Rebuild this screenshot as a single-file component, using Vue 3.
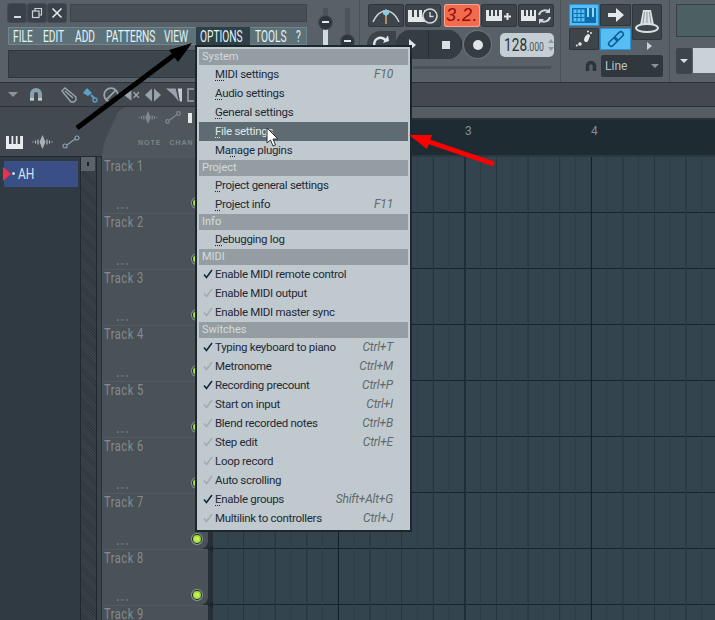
<script setup>
const topMenu = [
  { label: 'FILE', w: 30 },
  { label: 'EDIT', w: 32 },
  { label: 'ADD', w: 31 },
  { label: 'PATTERNS', w: 58 },
  { label: 'VIEW', w: 36 },
  { label: 'OPTIONS', w: 54, active: true },
  { label: 'TOOLS', w: 41 },
  { label: '?', w: 11 },
]

const sections = [
  {
    title: 'System',
    items: [
      { pre: '', key: 'M', post: 'IDI settings', hint: 'F10' },
      { pre: '', key: 'A', post: 'udio settings' },
      { pre: '', key: 'G', post: 'eneral settings' },
      { pre: '', key: 'F', post: 'ile settings', hover: true },
      { pre: 'Ma', key: 'n', post: 'age plugins' },
    ],
  },
  {
    title: 'Project',
    items: [
      { pre: '', key: 'P', post: 'roject general settings' },
      { pre: '', key: 'P', post: 'roject info', hint: 'F11' },
    ],
  },
  { title: 'Info', items: [{ pre: '', key: 'D', post: 'ebugging log' }] },
  {
    title: 'MIDI',
    items: [
      { pre: 'Enable MIDI remote control', check: 'on' },
      { pre: 'Enable MIDI output', check: 'off' },
      { pre: 'Enable MIDI master sync', check: 'off' },
    ],
  },
  {
    title: 'Switches',
    items: [
      { pre: 'Typing keyboard to piano', check: 'on', hint: 'Ctrl+T' },
      { pre: 'Metronome', check: 'off', hint: 'Ctrl+M' },
      { pre: 'Recording precount', check: 'on', hint: 'Ctrl+P' },
      { pre: 'Start on input', check: 'off', hint: 'Ctrl+I' },
      { pre: 'Blend recorded notes', check: 'off', hint: 'Ctrl+B' },
      { pre: 'Step edit', check: 'off', hint: 'Ctrl+E' },
      { pre: 'Loop record', check: 'off' },
      { pre: 'Auto scrolling', check: 'off' },
      { pre: '', key: 'E', post: 'nable groups', check: 'on', hint: 'Shift+Alt+G' },
      { pre: 'Multilink to controllers', check: 'off', hint: 'Ctrl+J' },
    ],
  },
]

const tracks = [1, 2, 3, 4, 5, 6, 7, 8, 9]
</script>

<template>
  <div class="app">
    <header class="top">
      <section class="win">
        <div class="win-row">
          <div class="win-btns">
            <button class="win-btn"><i class="min"></i></button>
            <button class="win-btn">
              <svg width="12" height="12" viewBox="0 0 12 12" fill="none" stroke="#c9d2d6" stroke-width="1.2"><rect x="1.5" y="4" width="6.5" height="6.5" /><path d="M4 4V1.5h6.5V8H8" /></svg>
            </button>
            <button class="win-btn">
              <svg width="12" height="12" viewBox="0 0 12 12" stroke="#e3e8ea" stroke-width="1.6"><path d="M1.5 1.5l9 9M10.5 1.5l-9 9" /></svg>
            </button>
          </div>
          <div class="title-field"></div>
        </div>
        <nav class="menubar">
          <span v-for="m in topMenu" :key="m.label" class="menubar-item" :class="{ active: m.active }" :style="{ width: m.w + 'px' }"><span class="cond">{{ m.label }}</span></span>
        </nav>
        <div class="hint-field"></div>
      </section>

      <section class="faders">
        <div class="fader"><i class="fader-fill"></i><i class="fader-knob"></i></div>
        <div class="fader low"><i class="fader-knob"></i></div>
      </section>

      <section class="transport">
        <div class="t-row">
          <button class="t-btn">
            <svg width="30" height="20" viewBox="0 0 30 20" fill="none"><path d="M2 16C5 9 9 6 13 5" stroke="#c9d4d8" stroke-width="1.5" /><path d="M28 16C25 9 21 6 17 5" stroke="#c9d4d8" stroke-width="1.5" /><path d="M15 3v15" stroke="#dba36a" stroke-width="1.5" /><path d="M12 4h6v4l-3 2-3-2z" fill="#8fc7e6" /></svg>
          </button>
          <button class="t-btn">
            <svg width="33" height="18" viewBox="0 0 33 18"><path d="M1 3h19v12H1z" fill="#e3e8ea" /><path d="M5 3h2v7H5zM10 3h2v7h-2zM15 3h2v7h-2z" fill="#3c444a" /><circle cx="23" cy="9" r="7" fill="#3c444a" stroke="#cfd8dc" stroke-width="1.6" /><path d="M23 5v4.5h3.5" fill="none" stroke="#cfd8dc" stroke-width="1.4" /></svg>
          </button>
          <button class="t-btn red">3.2.</button>
          <button class="t-btn">
            <svg width="28" height="16" viewBox="0 0 28 16"><path d="M1 2h16v11H1z" fill="#e3e8ea" /><path d="M4 2h2v6H4zM8 2h2v6H8zM12 2h2v6h-2z" fill="#3c444a" /><path d="M19 8.5h7M22.5 5v7" stroke="#e3e8ea" stroke-width="2" /></svg>
          </button>
          <button class="t-btn">
            <svg width="32" height="18" viewBox="0 0 32 18"><path d="M1 3h15v11H1z" fill="#e3e8ea" /><path d="M4 3h2v6H4zM8 3h2v6H8zM12 3h2v6h-2z" fill="#3c444a" /><path d="M19 8a6 6 0 0 1 10-3M30 10a6 6 0 0 1-10 3" fill="none" stroke="#cfd8dc" stroke-width="2" /><path d="M30 1v5h-5zM19 17v-5h5z" fill="#cfd8dc" /></svg>
          </button>
        </div>
        <div class="t-row second">
          <button class="loop-pill">
            <svg width="18" height="12" viewBox="0 0 18 12" fill="none"><path d="M2 11a6 6 0 0 1 11-6" stroke="#e3e8ea" stroke-width="2.4" /><path d="M10 7l6-2-1-6z" fill="#e3e8ea" /></svg>
          </button>
          <div class="play-group">
            <button class="pl-btn play"><i></i></button>
            <button class="pl-btn stop"><i></i></button>
          </div>
          <button class="rec"><i></i></button>
          <div class="tempo">
            <span class="tempo-val"><span class="big">128</span><span class="small">.000</span></span>
            <svg width="6" height="14" viewBox="0 0 6 14" fill="#8f9a9f"><path d="M3 1l3 4H0zM3 13L0 9h6z" /></svg>
          </div>
        </div>
        <div class="t-slim"></div>
      </section>

      <section class="tools">
        <div class="tools-grid">
          <button class="tool blue">
            <svg width="24" height="15" viewBox="0 0 24 15"><path d="M0 0h24v15H0z" fill="#0d6cab" /><path d="M1.5 1.5h11v12h-11z" fill="#58c2f7" /><path d="M1.5 5.5h11M1.5 9.5h11M5 1.5v12M9 1.5v12" stroke="#0d6cab" /><path d="M15 0h2v9h-2zM20 0h2v9h-2z" fill="#8ed9fb" /></svg>
          </button>
          <button class="tool">
            <svg width="16" height="14" viewBox="0 0 16 14" fill="#e3e8ea"><path d="M0 5h8V0l8 7-8 7V9H0z" /></svg>
          </button>
          <button class="tool tall">
            <svg width="24" height="30" viewBox="0 0 24 30"><path d="M8 3h8l3 15H5z" fill="#d9e0e3" /><path d="M9.500 5L8 17M12 5v12M14.500 5L16 17" stroke="#8d979c" /><ellipse cx="12" cy="21" rx="11" ry="4" fill="none" stroke="#d9e0e3" stroke-width="2" /></svg>
          </button>
          <button class="tool">
            <svg width="18" height="18" viewBox="0 0 18 18" fill="#e3e8ea"><path d="M9 10c0-3 2-5 4-6 1.500 0 2 1 2 2l-2 5c-1 2-4 1-4-1z" /><circle cx="13" cy="1.500" r="1" /><circle cx="16" cy="3" r="1" /><circle cx="5" cy="14" r="1.800" /><circle cx="1.800" cy="15.500" r="1" /></svg>
          </button>
          <button class="tool blue">
            <svg width="18" height="18" viewBox="0 0 18 18" fill="none" stroke="#0a5e97" stroke-width="1.600"><rect x="1" y="9.500" width="10" height="5" rx="2.500" transform="rotate(-45 6 12)" /><rect x="7" y="3.500" width="10" height="5" rx="2.500" transform="rotate(-45 12 6)" /></svg>
          </button>
        </div>
        <i class="tools-tri"></i>
        <div class="tools-line">
          <svg width="12" height="13" viewBox="0 0 12 13" fill="none"><path d="M2.500 11V6a3.500 3.500 0 0 1 7 0v5" stroke="#2d3439" stroke-width="3.500" /></svg>
          <div class="line-select"><span>Line</span><i></i></div>
        </div>
      </section>

      <section class="right">
        <div class="right-display"></div>
        <div class="right-row">
          <button class="right-btn"><i></i></button>
          <div class="right-field"></div>
        </div>
      </section>
    </header>

    <div class="toolbar">
      <i class="tb-tri"></i>
      <svg class="tb-icon magnet" width="14" height="15" viewBox="0 0 14 15" fill="none"><path d="M3 14V7a4 4 0 0 1 8 0v7" stroke="#8aa0ae" stroke-width="4" /><path d="M1 12h4M9 12h4" stroke="#c2ccd1" stroke-width="2" /></svg>
      <svg class="tb-icon" width="16" height="16" viewBox="0 0 16 16" fill="none" stroke="#98a5ac" stroke-width="1.4"><path d="M1 4l3-3 11 9v3l-2 2h-3zM4 4l8 7" /></svg>
      <svg class="tb-icon" width="16" height="16" viewBox="0 0 16 16"><path d="M1 6l4-5 5 5-4 3z" fill="#5d9ecb" /><path d="M9 8l3 3" stroke="#5d9ecb" stroke-width="2" /><circle cx="13" cy="13" r="2" fill="none" stroke="#5d9ecb" stroke-width="1.3" /></svg>
      <svg class="tb-icon" width="16" height="16" viewBox="0 0 14 14" fill="none" stroke="#98a5ac" stroke-width="1.5"><circle cx="7" cy="7" r="6" /><path d="M3 11l8-8" /></svg>
      <svg class="tb-icon" width="16" height="16" viewBox="0 0 15 13"><path d="M0 6.500L7 1v11z" fill="#98a5ac" /><path d="M9 4l5 5M14 4l-5 5" stroke="#98a5ac" stroke-width="1.3" /></svg>
      <svg class="tb-icon" width="16" height="16" viewBox="0 0 15 12" fill="#98a5ac"><path d="M6.500 0v12L0 6zM8.500 0v12L15 6z" /></svg>
      <svg class="tb-icon" width="16" height="16" viewBox="0 0 15 14"><path d="M0 1h9l3 12-5-6z" fill="#98a5ac" /><path d="M11 1h4v12h-2z" fill="#c2ccd1" /></svg>
      <svg class="tb-icon" width="16" height="16" viewBox="0 0 16 14" fill="none" stroke="#98a5ac" stroke-width="1.5"><path d="M7 1H1v12h6" /></svg>
    </div>

    <div class="workspace">
      <aside class="picker">
        <div class="picker-head">
          <svg width="17" height="13" viewBox="0 0 17 13"><path d="M0 0h17v13H0z" fill="#e6ecef" /><path d="M3 0h2.500v8H3zM7.300 0h2.500v8H7.300zM11.600 0h2.500v8h-2.500z" fill="#3f474e" /></svg>
          <svg width="21" height="14" viewBox="0 0 21 14" fill="#a8b2b7"><path d="M10.500 0l3 7-3 7-3-7z" /><path d="M6 4.500v5M15 4.500v5M3.500 5.500v3M17.500 5.500v3M1 6.500v1M20 6.500v1" stroke="#a8b2b7" stroke-width="1.3" /></svg>
          <svg width="18" height="14" viewBox="0 0 18 14" fill="none" stroke="#8aa0ae" stroke-width="1.2"><circle cx="3" cy="11" r="2" /><circle cx="15" cy="3" r="2" /><path d="M5 10l8-6" /></svg>
        </div>
        <div class="picker-body">
          <div class="channels">
            <div class="channel">
              <i class="ch-arrow"></i><i class="ch-dot"></i><span class="cond">AH</span>
            </div>
          </div>
          <div class="scroll"><button class="scroll-btn"><i></i></button></div>
        </div>
      </aside>

      <main class="playlist">
        <div class="pl-head">
          <div class="tab">
            <div class="tab-icons">
              <svg width="20" height="13" viewBox="0 0 21 14" fill="#7f898e"><path d="M10.500 0l3 7-3 7-3-7z" /><path d="M6 4.500v5M15 4.500v5M3.500 5.500v3M17.500 5.500v3M1 6.500v1M20 6.500v1" stroke="#7f898e" stroke-width="1.3" /></svg>
              <svg width="16" height="13" viewBox="0 0 16 13" fill="none" stroke="#7f898e" stroke-width="1.2"><circle cx="2.500" cy="10.500" r="1.800" /><circle cx="13.500" cy="2.500" r="1.800" /><path d="M4 9.500l8-6" /></svg>
              <i class="tab-white"></i>
            </div>
            <div class="tab-labels"><span>NOTE</span><span>CHAN</span></div>
          </div>
          <div class="head-right">
            <div class="strip"></div>
            <div class="ruler"><span class="bar three">3</span><span class="bar four">4</span></div>
          </div>
        </div>
        <div class="pl-body">
          <div class="tracks">
            <div v-for="t in tracks" :key="t" class="track">
              <span class="track-name"><span class="cond">Track {{ t }}</span></span>
              <span class="track-dots">...</span>
              <i class="led"></i>
              <i class="track-tip"></i>
            </div>
          </div>
          <div class="grid"></div>
        </div>
      </main>
    </div>

    <div class="menu">
      <template v-for="s in sections" :key="s.title">
        <div class="menu-head">{{ s.title }}</div>
        <div v-for="(it, i) in s.items" :key="i" class="menu-item" :class="{ hover: it.hover }">
          <svg v-if="it.check" class="check" :class="it.check" width="10" height="10" viewBox="0 0 10 10" fill="none"><path d="M1 5.500l2.500 3L9 1" stroke-width="1.5" /></svg>
          <span class="menu-label">{{ it.pre }}<u v-if="it.key">{{ it.key }}</u>{{ it.post }}</span>
          <span v-if="it.hint" class="menu-hint">{{ it.hint }}</span>
        </div>
      </template>
    </div>

    <svg class="overlay" width="715" height="620" viewBox="0 0 715 620">
      <path d="M77 128L178 52" stroke="#000" stroke-width="5" fill="none" />
      <path d="M192 43L169 50L178 62Z" fill="#000" />
      <path d="M494 164L424 140" stroke="#f00" stroke-width="5" fill="none" />
      <path d="M409 135L432 135L427 149Z" fill="#f00" />
      <path d="M267 128v15l3.500-3 2.500 6 2.500-1-2.500-6h5z" fill="#fff" stroke="#27343c" stroke-width="1" />
    </svg>
  </div>
</template>

<style scoped>
.app {
  position: relative;
  width: 715px;
  height: 620px;
  overflow: hidden;
  background: #3f474e;
  font-family: Roboto, sans-serif;
}
button {
  padding: 0;
  border: none;
  display: flex;
  align-items: center;
  justify-content: center;
}
.cond {
  display: inline-block;
  transform-origin: left center;
  white-space: nowrap;
}

/* top panel */
.top {
  display: flex;
  height: 83px;
  background: #596168;
  border-bottom: 1px solid #2a3238;
  box-sizing: border-box;
}
.win {
  width: 315px;
  padding: 4px 0 0 8px;
  box-sizing: border-box;
}
.win-row {
  display: flex;
  gap: 4px;
  width: 299px;
}
.win-btns {
  display: flex;
  gap: 2px;
}
.win-btn {
  width: 18px;
  height: 18px;
  border-radius: 2px;
  background: #39424a;
  box-shadow: 0 0 0 1px #454d53;
}
.min {
  display: block;
  width: 7px;
  height: 2px;
  margin-top: 8px;
  background: #d4dcdf;
}
.title-field {
  flex: 1;
  height: 18px;
  background: #464e56;
  border: 1px solid #3d454c;
  box-sizing: border-box;
}
.menubar {
  display: flex;
  width: 299px;
  height: 18px;
  margin-top: 5px;
  background: #5d7278;
  box-shadow: inset 0 0 0 1px #71868c;
  padding-left: 5px;
  box-sizing: border-box;
}
.menubar-item {
  display: block;
  font-size: 17px;
  line-height: 18px;
  color: #e2f5f9;
  white-space: nowrap;
  flex: none;
}
.menubar-item .cond {
  transform: scaleX(0.6);
}
.menubar-item.active {
  background: #2f3f47;
  margin: 0 5px 0 -4px;
  padding-left: 4px;
  box-sizing: border-box;
}
.hint-field {
  width: 299px;
  height: 28px;
  margin-top: 5px;
  background: #3e464d;
  border: 1px solid #30383e;
  box-sizing: border-box;
}

/* faders */
.faders {
  width: 45px;
  display: flex;
  gap: 17px;
  padding-left: 8px;
  box-sizing: border-box;
  border-right: 1px solid #4a5258;
}
.fader {
  position: relative;
  width: 5px;
  height: 40px;
  margin-top: 8px;
  background: #4c5359;
}
.fader-fill {
  position: absolute;
  left: 0;
  right: 0;
  top: 14px;
  bottom: 0;
  background: #d3dade;
}
.fader-knob {
  position: absolute;
  left: -4px;
  top: 8px;
  width: 13px;
  height: 13px;
  border-radius: 50%;
  background: #2e363c;
  box-shadow: 0 0 0 1px #454c52;
}
.fader-knob::after {
  content: "";
  position: absolute;
  left: 3px;
  top: 5px;
  width: 7px;
  height: 2px;
  background: #e3e8ea;
}
.fader.low .fader-knob {
  top: 27px;
}

/* transport */
.transport {
  width: 201px;
  padding: 4px 0 0 8px;
  box-sizing: border-box;
  border-right: 1px solid #4a5258;
}
.t-row {
  display: flex;
  gap: 1px;
}
.t-btn {
  width: 36px;
  height: 23px;
  border-radius: 3px;
  background: #3d454b;
  box-shadow: inset 0 0 0 1px #30373c;
}
.t-btn.red {
  margin-left: 2px;
  background: #f36b4f;
  box-shadow: inset 0 0 0 1px #ffa28e;
  color: #8f0e05;
  font-style: italic;
  font-size: 18px;
  letter-spacing: 0.5px;
}
.t-row.second {
  margin-top: 3px;
  align-items: center;
  height: 29px;
}
.loop-pill {
  width: 29px;
  height: 27px;
  margin-left: -1px;
  border-radius: 14px 0 0 14px;
  background: #3c444a;
  padding-bottom: 6px;
  box-sizing: border-box;
}
.play-group {
  display: flex;
  height: 29px;
  border-radius: 15px;
  overflow: hidden;
  background: #31393f;
  margin-left: -1px;
}
.pl-btn {
  width: 33px;
  height: 29px;
  background: #353d43;
  box-shadow: inset -1px 0 0 #272e33;
}
.pl-btn.play i {
  width: 0;
  height: 0;
  border-left: 7px solid #dfe5e8;
  border-top: 6px solid transparent;
  border-bottom: 6px solid transparent;
}
.pl-btn.stop i {
  width: 8px;
  height: 8px;
  background: #d9e0e3;
}
.rec {
  width: 27px;
  height: 27px;
  margin-left: 1px;
  border-radius: 50%;
  background: #353d43;
  box-shadow: 0 0 0 1px #6d757b;
}
.rec i {
  width: 10px;
  height: 10px;
  border-radius: 50%;
  background: #dfe5e8;
}
.tempo {
  display: flex;
  align-items: center;
  width: 54px;
  height: 24px;
  margin-left: 8px;
  padding-left: 4px;
  box-sizing: border-box;
  border-radius: 5px;
  background: #c5cfd3;
  color: #27313a;
}
.tempo-val {
  display: block;
  width: 44px;
  flex: none;
  white-space: nowrap;
  transform: scaleX(0.72);
  transform-origin: left center;
}
.tempo .big {
  font-size: 19px;
}
.tempo .small {
  font-size: 12px;
  color: #4a545b;
}
.t-slim {
  width: 138px;
  height: 3px;
  margin: 7px 0 0 45px;
  background: #4a5157;
}

/* tools */
.tools {
  width: 109px;
  padding: 4px 0 0 8px;
  box-sizing: border-box;
  border-right: 1px solid #4a5258;
  position: relative;
}
.tools-grid {
  display: grid;
  grid-template-columns: 30px 31px 30px;
  grid-template-rows: 22px 22px;
  gap: 2px 1px;
}
.tool {
  background: #3d454b;
  border-radius: 2px;
  box-shadow: inset 0 0 0 1px #30373c;
}
.tool.tall {
  grid-row: span 2;
  height: 36px;
}
.tool.blue {
  background: #57bdf3;
  box-shadow: inset 0 0 0 1px #2a93d6;
}
.tools-tri {
  position: absolute;
  left: 86px;
  top: 42px;
  width: 0;
  height: 0;
  border-left: 5px solid #c9d2d6;
  border-top: 4px solid transparent;
  border-bottom: 4px solid transparent;
}
.tools-line {
  display: flex;
  justify-content: flex-end;
  align-items: center;
  gap: 4px;
  margin-top: 5px;
  width: 94px;
}
.line-select {
  display: flex;
  align-items: center;
  justify-content: space-between;
  width: 62px;
  height: 22px;
  padding: 0 4px;
  box-sizing: border-box;
  background: #30373d;
  border-radius: 2px;
  color: #b8c2c6;
  font-size: 12px;
}
.line-select i {
  width: 0;
  height: 0;
  border-top: 4px solid #8a9398;
  border-left: 4px solid transparent;
  border-right: 4px solid transparent;
}

/* right panel */
.right {
  flex: 1;
  padding: 4px 0 0 6px;
}
.right-display {
  height: 33px;
  background: #4c5f63;
  border: 1px solid #373f45;
  border-right: none;
  box-sizing: border-box;
}
.right-row {
  display: flex;
  margin-top: 11px;
  gap: 1px;
}
.right-btn {
  width: 16px;
  height: 26px;
  background: #3d454b;
  border-radius: 2px;
}
.right-btn i {
  width: 0;
  height: 0;
  border-top: 4px solid #d9e0e3;
  border-left: 4px solid transparent;
  border-right: 4px solid transparent;
}
.right-field {
  flex: 1;
  height: 25px;
  background: #c9d3d7;
}

/* toolbar */
.toolbar {
  display: flex;
  align-items: center;
  height: 24px;
  gap: 5px;
  padding-left: 8px;
  background: #43494f;
  border-bottom: 1px solid #2c3338;
  box-sizing: border-box;
}
.tb-tri {
  flex: none;
  width: 0;
  height: 0;
  margin-right: 5px;
  border-top: 5px solid #8a9398;
  border-left: 5px solid transparent;
  border-right: 5px solid transparent;
}
.tb-icon {
  flex: 0 0 16px;
}
.tb-icon.magnet {
  margin-right: 12px;
}

/* workspace */
.workspace {
  display: flex;
  height: 513px;
}
.picker {
  width: 102px;
  flex: none;
  display: flex;
  flex-direction: column;
  background: #3a444b;
}
.picker-head {
  height: 50px;
  flex: none;
  display: flex;
  align-items: flex-end;
  gap: 9px;
  padding: 0 0 7px 6px;
  box-sizing: border-box;
  background: #424950;
  border-bottom: 1px solid #232b31;
}
.picker-body {
  flex: 1;
  display: flex;
  border-right: 1px solid #272f35;
  box-sizing: border-box;
}
.channels {
  width: 81px;
  padding-top: 4px;
  box-sizing: border-box;
  background: #2f3a42;
  border-right: 1px solid #20282e;
}
.channel {
  position: relative;
  display: flex;
  align-items: center;
  width: 74px;
  height: 26px;
  margin-left: 4px;
  padding-left: 14px;
  box-sizing: border-box;
  background: #3a4f86;
  color: #d5e4f5;
  font-size: 15px;
}
.channel .cond {
  transform: scaleX(0.8);
}
.ch-arrow {
  position: absolute;
  left: -1px;
  top: 6px;
  width: 0;
  height: 0;
  border-left: 8px solid #ef2f4d;
  border-top: 7px solid transparent;
  border-bottom: 7px solid transparent;
}
.ch-dot {
  position: absolute;
  left: 8px;
  top: 11px;
  width: 3px;
  height: 3px;
  border-radius: 50%;
  background: #c8d6e6;
}
.scroll {
  width: 15px;
  background: repeating-linear-gradient(45deg, #2f383e 0 1px, #3a4349 1px 2px);
  border-right: 1px solid #20282e;
}
.scroll-btn {
  width: 14px;
  height: 14px;
  background: #5a6369;
}
.scroll-btn i {
  width: 2px;
  height: 4px;
  background: #1c2328;
}

.playlist {
  flex: 1;
  display: flex;
  flex-direction: column;
  min-width: 0;
}
.pl-head {
  height: 50px;
  display: flex;
  flex: none;
  background: #424950;
}
.tab {
  width: 111px;
  flex: none;
  background: #4f575d;
  clip-path: polygon(0 100%, 2px 36px, 16px 5px, 23px 0, 100% 0, 100% 100%);
  padding: 4px 0 0 36px;
  box-sizing: border-box;
}
.tab-icons {
  display: flex;
  align-items: center;
  gap: 7px;
}
.tab-white {
  width: 4px;
  height: 10px;
  background: #e3e8ea;
}
.tab-labels {
  display: flex;
  gap: 8px;
  margin-top: 15px;
  font-family: "Liberation Sans", sans-serif;
  font-size: 7px;
  font-weight: 700;
  letter-spacing: 1px;
  color: #7a8388;
}
.head-right {
  flex: 1;
  display: flex;
  flex-direction: column;
}
.strip {
  height: 13px;
  background: #555d64;
  border-bottom: 2px solid #2b333a;
  box-sizing: border-box;
}
.ruler {
  position: relative;
  flex: 1;
  background: #1f2b33;
  border-bottom: 2px solid #2d3941;
  font-size: 12px;
  color: #7f8f99;
}
.bar {
  position: absolute;
  top: 4px;
}
.bar.three {
  left: 252px;
}
.bar.four {
  left: 378px;
}
.pl-body {
  flex: 1;
  display: flex;
  min-height: 0;
}
.tracks {
  width: 111px;
  flex: none;
  overflow: hidden;
  background: #262f35;
}
.track {
  position: relative;
  width: 106px;
  height: 56px;
  box-sizing: border-box;
  padding: 0 0 0 2px;
  background: #4a5157;
  border-top: 1px solid #525a5f;
  border-bottom-right-radius: 8px;
}
.track-name {
  display: block;
  font-size: 15px;
  line-height: 17px;
  letter-spacing: 0.7px;
  color: #828c8f;
}
.track-name .cond {
  transform: scaleX(0.74);
}
.track-dots {
  position: absolute;
  left: 14px;
  top: 40px;
  font-family: "Liberation Sans", sans-serif;
  font-size: 13px;
  font-weight: 700;
  line-height: 14px;
  letter-spacing: 1px;
  color: #697276;
}
.led {
  position: absolute;
  left: 91px;
  top: 41px;
  width: 8px;
  height: 8px;
  border-radius: 50%;
  background: radial-gradient(circle, #c5f04c 30%, #6fb321 100%);
  box-shadow: 0 0 0 1px #1d2a20, 0 0 0 2px #8d979b;
}
.track-tip {
  position: absolute;
  right: -6px;
  bottom: -4px;
  width: 0;
  height: 0;
  border-right: 7px solid #1d262c;
  border-top: 4px solid transparent;
  border-bottom: 4px solid transparent;
  z-index: 1;
}
.grid {
  flex: 1;
  background-color: #34444f;
  background-image:
    linear-gradient(90deg, #15212a 0 1px, transparent 1px),
    linear-gradient(90deg, #243540 0 1px, transparent 1px),
    linear-gradient(90deg, #2d3d47 0 1px, transparent 1px),
    linear-gradient(180deg, #18252e 0 1px, transparent 1px);
  background-size: 126.5px 100%, 31.62px 100%, 15.81px 100%, 100% 56px;
  background-position: -1.5px 0, -1.5px 0, -1.5px 0, 0 55px;
}

/* popup menu */
.menu {
  position: absolute;
  z-index: 5;
  left: 195px;
  top: 45px;
  width: 217px;
  box-sizing: border-box;
  padding: 2px;
  background: #bfc9ce;
  border: 2px solid #1b262d;
  font-size: 11.5px;
  letter-spacing: -0.3px;
}
.menu-head {
  height: 16px;
  width: 209px;
  padding-left: 3px;
  box-sizing: border-box;
  background: #949ea2;
  color: #d4dadc;
  font-size: 11px;
  letter-spacing: 0;
  line-height: 16px;
}
.menu-item {
  position: relative;
  display: flex;
  justify-content: space-between;
  width: 209px;
  height: 19px;
  padding: 0 15px 0 16px;
  box-sizing: border-box;
  color: #1f2a38;
  line-height: 19px;
}
.menu-item.hover {
  background: #5f6b72;
  color: #dfe6e9;
}
.menu-item u {
  text-decoration: underline dotted;
  text-underline-offset: 2px;
}
.menu-hint {
  font-style: italic;
  font-size: 12px;
  letter-spacing: -0.2px;
  color: #5f696e;
}
.check {
  position: absolute;
  left: 4px;
  top: 4px;
}
.check.on {
  stroke: #16233a;
}
.check.off {
  stroke: #a0abaf;
}
.overlay {
  position: absolute;
  z-index: 6;
  left: 0;
  top: 0;
  pointer-events: none;
}
</style>
